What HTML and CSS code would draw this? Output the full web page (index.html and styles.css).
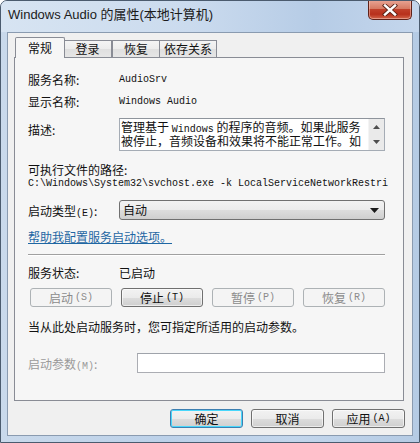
FILE: index.html
```html
<!DOCTYPE html>
<html lang="zh-CN">
<head>
<meta charset="utf-8">
<title>Windows Audio 的属性(本地计算机)</title>
<link rel="stylesheet" href="styles.css">
</head>
<body>
<div class="window">
  <div class="titlebar">
    <span class="title">Windows Audio 的属性(本地计算机)</span>
    <div class="close">
      <svg width="16" height="12" viewBox="0 0 16 12">
        <path d="M3 1.5 L13 10.5 M13 1.5 L3 10.5" stroke="#5a2418" stroke-width="4.2" stroke-linecap="square"/>
        <path d="M3 1.5 L13 10.5 M13 1.5 L3 10.5" stroke="#ffffff" stroke-width="2.4" stroke-linecap="square"/>
      </svg>
    </div>
  </div>
  <div class="client">
    <div class="tabs">
      <div class="tab active">常规</div>
      <div class="tab t2">登录</div>
      <div class="tab t3">恢复</div>
      <div class="tab t4">依存关系</div>
    </div>
    <div class="panel">
      <div class="row r-name"><span class="label">服务名称:</span><span class="mono">AudioSrv</span></div>
      <div class="row r-disp"><span class="label">显示名称:</span><span class="mono">Windows Audio</span></div>
      <div class="r-desc">
        <span class="label desc-label">描述:</span>
        <div class="textarea">
          <div class="ta-text">
            <div class="ta-line">管理基于 <span class="mono">Windows</span> 的程序的音频。如果此服务</div>
            <div class="ta-line">被停止，音频设备和效果将不能正常工作。如</div>
          </div>
          <div class="scrollbar">
            <svg width="7" height="4" viewBox="0 0 7 4"><path d="M0 4 L3.5 0 L7 4 Z" fill="#4d4d4d"/></svg>
            <svg width="7" height="4" viewBox="0 0 7 4"><path d="M0 0 L3.5 4 L7 0 Z" fill="#4d4d4d"/></svg>
          </div>
        </div>
      </div>
      <div class="r-exe">可执行文件的路径:</div>
      <div class="r-path mono">C:\Windows\System32\svchost.exe -k LocalServiceNetworkRestri</div>
      <div class="row r-type">
        <span class="label">启动类型<span class="mono">(E)</span>:</span>
        <div class="select">
          <span>自动</span>
          <svg width="9" height="5" viewBox="0 0 9 5"><path d="M0 0 L9 0 L4.5 5 Z" fill="#1a1a1a"/></svg>
        </div>
      </div>
      <div class="r-link"><a class="link">帮助我配置服务启动选项。</a></div>
      <div class="sep"></div>
      <div class="row r-status"><span class="label">服务状态:</span><span>已启动</span></div>
      <div class="btnrow">
        <div class="btn disabled">启动<span class="mono">(S)</span></div>
        <div class="btn">停止<span class="mono">(T)</span></div>
        <div class="btn disabled">暂停<span class="mono">(P)</span></div>
        <div class="btn disabled">恢复<span class="mono">(R)</span></div>
      </div>
      <div class="r-hint">当从此处启动服务时，您可指定所适用的启动参数。</div>
      <div class="row r-param">
        <span class="label param-label">启动参数<span class="mono">(M)</span>:</span>
        <div class="input"></div>
      </div>
    </div>
    <div class="footer">
      <div class="btn fbtn default">确定</div>
      <div class="btn fbtn">取消</div>
      <div class="btn fbtn">应用<span class="mono">(A)</span></div>
    </div>
  </div>
</div>
</body>
</html>
```
FILE: styles.css
```css
* { box-sizing: border-box; }
html, body { margin: 0; padding: 0; background: #ffffff; }
body {
  font-family: "Noto Sans CJK SC", "Liberation Sans", sans-serif;
  font-size: 12px;
  color: #111;
}
.mono {
  font-family: "Liberation Mono", "Noto Sans CJK SC", monospace;
  font-size: 10px;
}
.window {
  width: 420px;
  height: 443px;
  border: 1px solid #4b5b6e;
  border-radius: 7px 7px 0 0;
  background: linear-gradient(90deg, #c9d9eb 0%, #bcd1e9 40%, #c3d6ec 70%, #b5cbe4 100%);
  display: flex;
  flex-direction: column;
  overflow: hidden;
}
.titlebar {
  height: 31px;
  display: flex;
  align-items: flex-start;
  justify-content: space-between;
  padding-left: 7px;
  padding-right: 7px;
  background: linear-gradient(90deg, #d7e4f2 0%, #cbdbee 45%, #b6cce6 75%, #c4d6ec 100%);
}
.title {
  margin-top: 6px;
  font-family: "Liberation Sans", "Noto Sans CJK SC", sans-serif;
  font-size: 13px;
  line-height: 16px;
  color: #1b1b1b;
}
.close {
  margin-top: -1px;
  width: 44px;
  height: 20px;
  border: 1px solid #5f2219;
  border-top: none;
  border-radius: 0 0 5px 5px;
  background: linear-gradient(#e9a696 0%, #d67a63 45%, #c0402a 50%, #b8301c 75%, #d2654a 100%);
  box-shadow: inset 0 0 0 1px rgba(255,220,210,0.45);
  display: flex;
  align-items: center;
  justify-content: center;
}
.client {
  margin: 0 6px 6px 6px;
  flex: 1;
  background: #f0f0f0;
  border: 1px solid #8a9bb0;
  display: flex;
  flex-direction: column;
}
.tabs {
  height: 25px;
  margin-bottom: -1px;
  margin-left: 7px;
  padding-top: 4px;
  display: flex;
  align-items: flex-end;
}
.tab {
  height: 17px;
  margin-bottom: 1px;
  border: 1px solid #898c95;
  border-bottom: none;
  background: linear-gradient(#f4f4f4 0%, #ececec 50%, #dfdfdf 51%, #e6e6e6 100%);
  font-size: 12px;
  line-height: 15px;
  text-align: center;
  color: #111;
}
.tab.active {
  position: relative;
  z-index: 1;
  height: 21px;
  margin-bottom: 0;
  width: 50px;
  background: #f6f6f6;
  line-height: 19px;
  border-radius: 2px 2px 0 0;
}
.t2 { width: 48px; margin-left: -1px; border-left: none; }
.t3 { width: 48px; }
.t4 { width: 58px; margin-left: -1px; }
.panel {
  margin: 0 8px 0 6px;
  height: 344px;
  border: 1px solid #898c95;
  background: #f6f6f6;
  padding: 11px 18px 0 13px;
}
.row {
  display: flex;
  align-items: center;
}
.label {
  width: 91px;
  flex: none;
}
.r-name, .r-disp { height: 22px; line-height: 14px; }
.r-desc {
  margin-top: 5px;
  display: flex;
  align-items: flex-start;
}
.desc-label { padding-top: 5px; line-height: 14px; }
.textarea {
  flex: 1;
  height: 33px;
  border: 1px solid #a5acb5;
  border-top-color: #8e949c;
  background: #ffffff;
  display: flex;
}
.ta-text {
  flex: 1;
  padding: 1px 0 0 1px;
  overflow: hidden;
  white-space: nowrap;
}
.ta-line {
  height: 14px;
  line-height: 14px;
}
.scrollbar {
  width: 16px;
  background: #eaeaea;
  border-left: 1px solid #f4f4f4;
  display: flex;
  flex-direction: column;
  align-items: center;
  justify-content: space-between;
  padding: 6px 0 6px;
}
.r-exe { margin-top: 11px; height: 16px; line-height: 16px; }
.r-path { height: 12px; line-height: 12px; white-space: nowrap; letter-spacing: 0; }
.r-type { margin-top: 10px; height: 20px; }
.select {
  flex: 1;
  height: 20px;
  border: 1px solid #707070;
  border-radius: 3px;
  background: linear-gradient(#f2f2f2 0%, #ebebeb 50%, #dddddd 51%, #cfcfcf 100%);
  display: flex;
  align-items: center;
  justify-content: space-between;
  padding: 0 5px 0 3px;
  line-height: 14px;
}
.r-link { margin-top: 10px; height: 14px; line-height: 14px; }
.link {
  color: #1f67a3;
  text-decoration: underline;
  text-underline-offset: 1px;
}
.sep {
  margin-top: 10px;
  height: 2px;
  border-top: 1px solid #a0a0a0;
  border-bottom: 1px solid #ffffff;
}
.r-status { margin-top: 9px; height: 16px; line-height: 16px; }
.btnrow {
  margin-top: 7px;
  padding-left: 2px;
  display: grid;
  grid-template-columns: repeat(4, 82px);
  column-gap: 9px;
}
.btn {
  height: 19px;
  border: 1px solid #707070;
  border-radius: 3px;
  background: linear-gradient(#f2f2f2 0%, #ebebeb 50%, #dddddd 51%, #cfcfcf 100%);
  box-shadow: inset 0 0 0 1px rgba(255,255,255,0.6);
  display: flex;
  align-items: center;
  justify-content: center;
  line-height: 14px;
  color: #111;
}
.btn .mono { margin-left: 2px; }
.btn.disabled {
  border-color: #adb2b5;
  background: #f4f4f4;
  box-shadow: none;
  color: #8b8b8b;
}
.r-hint { margin-top: 13px; height: 14px; line-height: 14px; white-space: nowrap; }
.r-param { margin-top: 19px; height: 20px; }
.param-label { width: 109px; color: #9a9a9a; }
.input {
  flex: 1;
  height: 20px;
  border: 1px solid #abadb3;
  border-top-color: #9fa3aa;
  background: #ffffff;
}
.footer {
  display: flex;
  justify-content: flex-end;
  gap: 8px;
  padding: 8px 7px 0 0;
}
.fbtn { width: 73px; }
.fbtn.default {
  border-color: #3c7fb1;
  box-shadow: inset 0 0 0 1px #48d7fb;
}
```
